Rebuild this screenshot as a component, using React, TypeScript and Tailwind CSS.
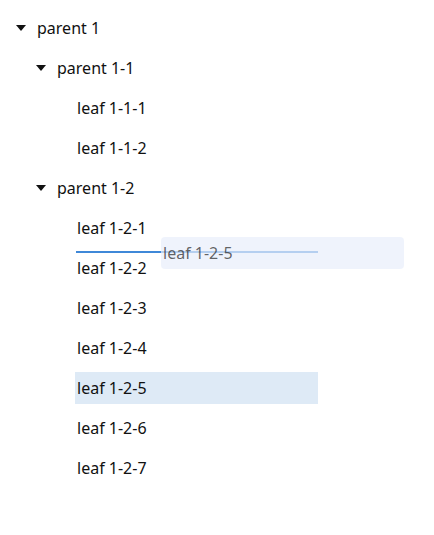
type Node = { title: string; depth: number; leaf?: boolean; selected?: boolean };

const rows: Node[] = [
  { title: "parent 1", depth: 0 },
  { title: "parent 1-1", depth: 1 },
  { title: "leaf 1-1-1", depth: 2, leaf: true },
  { title: "leaf 1-1-2", depth: 2, leaf: true },
  { title: "parent 1-2", depth: 1 },
  { title: "leaf 1-2-1", depth: 2, leaf: true },
  { title: "leaf 1-2-2", depth: 2, leaf: true },
  { title: "leaf 1-2-3", depth: 2, leaf: true },
  { title: "leaf 1-2-4", depth: 2, leaf: true },
  { title: "leaf 1-2-5", depth: 2, leaf: true, selected: true },
  { title: "leaf 1-2-6", depth: 2, leaf: true },
  { title: "leaf 1-2-7", depth: 2, leaf: true },
];

const indents = ["ml-[15px]", "ml-[35px]", "ml-[55px]"];

function Caret() {
  return (
    <svg width="10" height="6" viewBox="0 0 10 6" className="-ml-px">
      <path d="M0 0 L10 0 L5 6 Z" fill="#111" />
    </svg>
  );
}

export default function App() {
  return (
    <div
      className="relative w-[434px] h-[535px] bg-white pt-3 text-base text-[#111]"
      style={{ fontFamily: '"Noto Sans", "Open Sans", sans-serif' }}
    >
      {rows.map((r) => (
        <div key={r.title} className={`flex h-8 mb-2 items-center ${indents[r.depth]}`}>
          {r.leaf ? (
            <>
              <span className="w-5 shrink-0" />
              <div
                className={`flex h-8 w-[243px] items-center pl-0.5 ${r.selected ? "bg-[#deeaf6]" : ""}`}
              >
                {r.title}
              </div>
            </>
          ) : (
            <div className="flex h-8 items-center pl-0.5">
              <span className="flex w-5 items-center">
                <Caret />
              </span>
              {r.title}
            </div>
          )}
        </div>
      ))}

      {/* drop indicator */}
      <div className="absolute left-[76px] top-[251px] h-[2px] w-[242px] bg-[#3f88d8]" />

      {/* drag ghost */}
      <div className="absolute left-[161px] top-[237px] flex h-8 w-[243px] items-center rounded-sm bg-[#e8eefb]/70 pl-0.5 text-[#222]/70">
        leaf 1-2-5
      </div>
    </div>
  );
}
